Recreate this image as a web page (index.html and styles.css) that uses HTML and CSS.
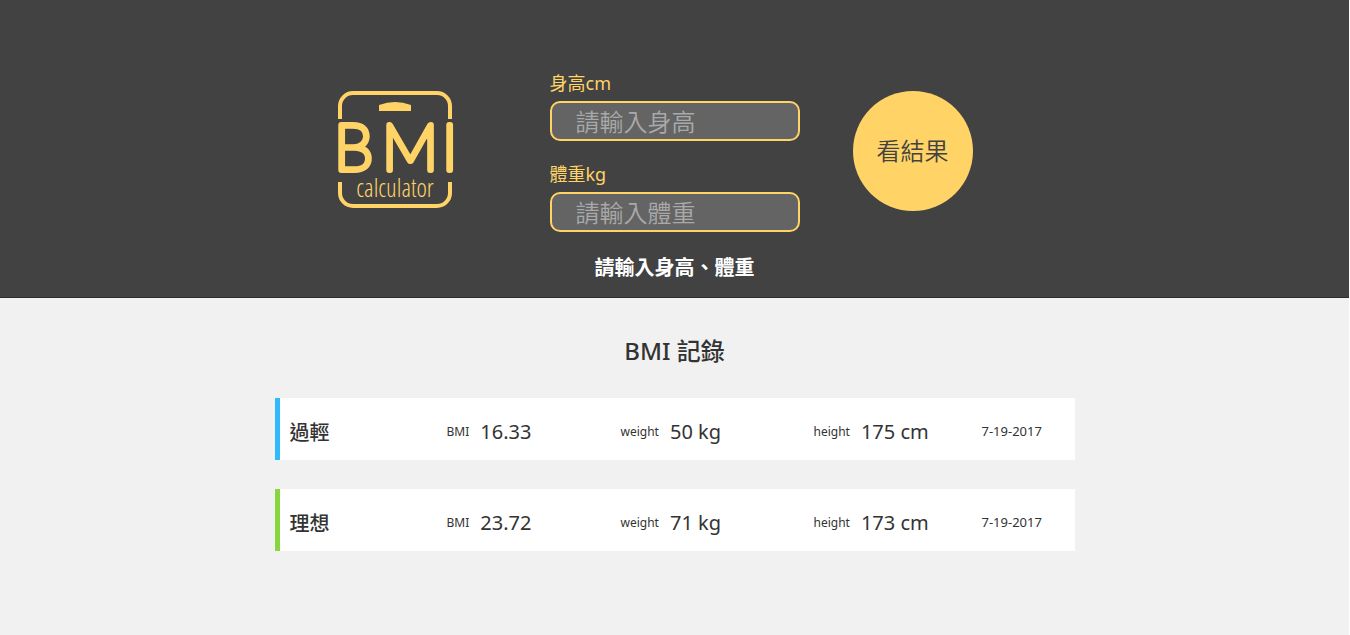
FILE: index.html
```html
<!DOCTYPE html>
<html lang="zh-Hant">
<head>
<meta charset="utf-8">
<meta name="viewport" content="width=device-width, initial-scale=1">
<title>BMI calculator</title>
<link rel="stylesheet" href="styles.css">
</head>
<body>
<header class="header">
  <form class="calculator">
    <svg class="logo" viewBox="0 0 118 118" role="img" aria-label="BMI calculator">
      <g class="logo-frame">
        <path d="M4 28V15A13 13 0 0 1 17 2H101A13 13 0 0 1 114 15V28"/>
        <path d="M4 91V102A13 13 0 0 0 17 115H101A13 13 0 0 0 114 102V91"/>
      </g>
      <path class="logo-dial" d="M43 14Q59 8 75 14V20H43Z"/>
      <text class="logo-name" y="79" x="-2 46 106">BMI</text>
      <text class="logo-caption" x="59" y="106" text-anchor="middle">calculator</text>
    </svg>
    <div class="fields">
      <div class="field">
        <label class="label" for="height">身高cm</label>
        <input class="input" id="height" type="text" placeholder="請輸入身高">
      </div>
      <div class="field">
        <label class="label" for="weight">體重kg</label>
        <input class="input" id="weight" type="text" placeholder="請輸入體重">
      </div>
    </div>
    <button class="submit" type="button">看結果</button>
  </form>
  <p class="message">請輸入身高、體重</p>
</header>
<main class="records">
  <h1 class="title">BMI 記錄</h1>
  <ul class="list">
    <li class="record record-light">
      <span class="status">過輕</span>
      <span class="item"><span class="name">BMI</span><span class="value">16.33</span></span>
      <span class="item"><span class="name">weight</span><span class="value">50 kg</span></span>
      <span class="item"><span class="name">height</span><span class="value">175 cm</span></span>
      <time class="date" datetime="2017-07-19">7-19-2017</time>
    </li>
    <li class="record record-ideal">
      <span class="status">理想</span>
      <span class="item"><span class="name">BMI</span><span class="value">23.72</span></span>
      <span class="item"><span class="name">weight</span><span class="value">71 kg</span></span>
      <span class="item"><span class="name">height</span><span class="value">173 cm</span></span>
      <time class="date" datetime="2017-07-19">7-19-2017</time>
    </li>
  </ul>
</main>
</body>
</html>
```
FILE: styles.css
```css
* {
  box-sizing: border-box;
}

body {
  margin: 0;
  min-height: 100vh;
  border-right: 1px solid #fff;
  background: #f1f1f1;
  color: #333;
  font-family: "Noto Sans", "Noto Sans CJK TC", sans-serif;
}

.header {
  padding: 70px 16px 14px;
  background: #424242;
  border-bottom: 1px solid #2c2c2c;
}

.calculator {
  display: grid;
  grid-template-columns: 161px 250px 120px;
  justify-content: center;
  align-items: start;
  max-width: 800px;
  margin: 0 auto;
  padding-right: 41px;
  column-gap: 53px;
}

.logo {
  width: 118px;
  height: 118px;
  margin-top: 21px;
  overflow: visible;
}

.logo-frame {
  fill: none;
  stroke: #ffd366;
  stroke-width: 4;
}

.logo-dial {
  fill: #ffd366;
}

.logo-name {
  font-family: Lato, sans-serif;
  font-size: 63px;
  font-weight: 100;
  fill: #ffd366;
  stroke: #ffd366;
  stroke-width: 6;
  stroke-linejoin: round;
}

.logo-caption {
  font-family: "Open Sans Condensed Light", "Open Sans Condensed", sans-serif;
  font-size: 25px;
  font-weight: 300;
  fill: #ffd366;
}

.fields {
  display: grid;
  gap: 20px;
}

.label {
  display: block;
  margin-bottom: 5px;
  color: #ffd366;
  font-size: 18px;
  line-height: 26px;
}

.input {
  display: block;
  width: 100%;
  height: 40px;
  padding: 0 24px;
  border: 2px solid #ffd366;
  border-radius: 10px;
  background: #646464;
  color: #fff;
  font-family: inherit;
  font-size: 24px;
  font-weight: 350;
}

.input::placeholder {
  color: #a9a9a9;
}

.submit {
  width: 120px;
  height: 120px;
  margin-top: 21px;
  padding: 0 0 4px;
  border: 0;
  border-radius: 50%;
  background: #ffd366;
  color: #424242;
  font-family: inherit;
  font-size: 24px;
  font-weight: 350;
}

.message {
  margin: 21px 0 0;
  color: #fff;
  font-size: 20px;
  font-weight: 700;
  line-height: 30px;
  text-align: center;
}

.records {
  max-width: 832px;
  margin: 0 auto;
  padding: 35px 16px;
}

.title {
  margin: 0 0 30px;
  font-size: 24px;
  font-weight: 500;
  line-height: 35px;
  text-align: center;
}

.list {
  display: grid;
  gap: 29px;
  margin: 0;
  padding: 0;
  list-style: none;
}

.record {
  display: grid;
  grid-template-columns: 157fr 174fr 193fr 168fr 93fr;
  align-items: center;
  min-height: 62px;
  padding: 4px 0 0 10px;
  border-left: 5px solid;
  background: #fff;
}

.record-light {
  border-color: #31baf9;
}

.record-ideal {
  border-color: #86d73f;
}

.status {
  color: #333;
  font-size: 20px;
  font-weight: 500;
}

.item {
  display: flex;
  align-items: center;
  gap: 11px;
  color: #333;
}

.name {
  font-size: 12px;
}

.value {
  font-size: 20px;
}

.date {
  color: #333;
  font-size: 13px;
}
```
